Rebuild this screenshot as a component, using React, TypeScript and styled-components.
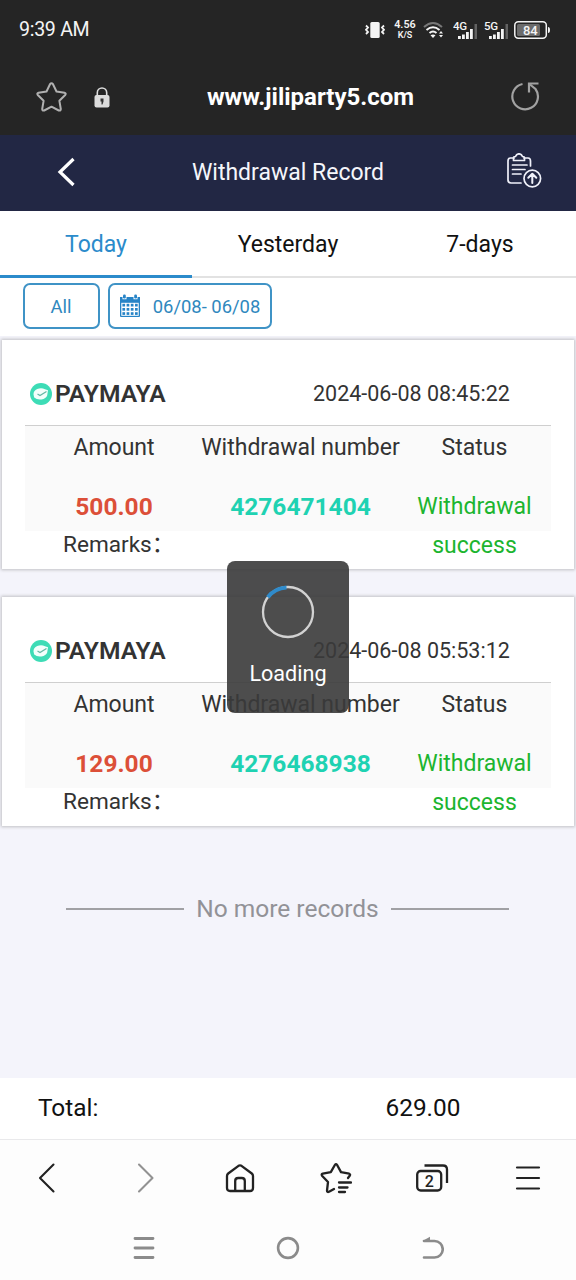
import React from 'react';
import styled, { createGlobalStyle } from 'styled-components';

const GlobalStyle = createGlobalStyle`
  * { box-sizing: border-box; }
  body { margin: 0; background: #fff; font-family: Roboto, "Noto Sans CJK SC", sans-serif; }
  svg { display: block; flex: none; }
`;

const Screen = styled.div`
  width: 576px;
  height: 1280px;
  display: flex;
  flex-direction: column;
  background: #f4f4fb;
  overflow: hidden;
`;

const StatusBar = styled.div`
  height: 60px;
  flex: none;
  display: flex;
  align-items: center;
  justify-content: space-between;
  padding: 0 25px 1px 19px;
  background: #252525;
  color: #f4f4f4;
`;

const Clock = styled.span`
  font-size: 19.6px;
  letter-spacing: -0.3px;
`;

const StatusIcons = styled.div`
  display: flex;
  align-items: center;
`;

const NetSpeed = styled.div`
  width: 22px;
  margin: 0 7px 0 9px;
  display: flex;
  flex-direction: column;
  align-items: center;
  font-weight: 600;
  font-size: 10.8px;
  line-height: 10px;
  & > span + span { font-size: 9px; }
`;

const AddressBar = styled.div`
  height: 75px;
  flex: none;
  display: grid;
  grid-template-columns: 36px 66px 1fr 66px;
  align-items: center;
  padding-bottom: 1px;
  background: #252525;
`;

const AddressIcons = styled.div`
  grid-column: 2;
  display: flex;
  align-items: center;
  gap: 27px;
`;

const Url = styled.div`
  grid-column: 3;
  padding-left: 9px;
  text-align: center;
  font-size: 24px;
  font-weight: 700;
  color: #fff;
`;

const Reload = styled.div`
  grid-column: 4;
`;

const Header = styled.header`
  height: 76px;
  flex: none;
  display: grid;
  grid-template-columns: 96px 1fr 96px;
  align-items: center;
  background: #222744;
  color: #f5f6fb;
  text-align: center;
`;

const BackButton = styled.div`
  padding: 0 0 2px 56px;
`;

const Title = styled.h1`
  margin: 0;
  padding-bottom: 1px;
  font-size: 23px;
  font-weight: 400;
`;

const HistoryButton = styled.div`
  padding: 0 0 5px 26px;
`;

const Tabs = styled.nav`
  height: 67px;
  flex: none;
  display: grid;
  grid-template-columns: repeat(3, 1fr);
  background: #fff;
`;

const Tab = styled.div<{ $active?: boolean }>`
  display: flex;
  align-items: center;
  justify-content: center;
  padding-top: ${(p) => (p.$active ? 3 : 2)}px;
  border-bottom: ${(p) => (p.$active ? '3px solid #2b8bcb' : '2px solid #e2e2e2')};
  color: ${(p) => (p.$active ? '#2b8bcb' : '#111')};
  font-size: 23px;
`;

const Filters = styled.div`
  height: 58px;
  flex: none;
  display: flex;
  gap: 8px;
  padding: 5px 23px;
  background: #fff;
`;

const FilterButton = styled.div<{ $width: number }>`
  width: ${(p) => p.$width}px;
  height: 46px;
  display: flex;
  align-items: center;
  justify-content: center;
  gap: 12px;
  padding-right: 1px;
  border: 2px solid #3f93c6;
  border-radius: 7px;
  color: #2f88be;
  font-size: 18.4px;
`;

const Records = styled.main`
  flex: 1;
  display: flex;
  flex-direction: column;
  gap: 28px;
`;

const Card = styled.section`
  height: 229px;
  flex: none;
  margin: 0 2px;
  padding: 0 23px;
  background: #fff;
  box-shadow: 0 0 3px 1px #c0c0c4;
  color: #333;
  font-size: 23px;

  &:first-child { margin-top: 4px; }
`;

const CardHead = styled.div`
  height: 86px;
  display: flex;
  align-items: center;
  padding: 22px 0 0 4px;
  border-bottom: 1px solid #cfcfcf;
`;

const Provider = styled.span`
  width: 260px;
  padding-left: 2px;
  font-size: 24.6px;
  font-weight: 600;
`;

const Stamp = styled.span`
  font-size: 21.5px;
`;

const Details = styled.div`
  height: 105px;
  display: grid;
  grid-template-columns: 178px 195px 153px;
  grid-template-rows: 61px 39px;
  background: #fafafa;
  line-height: 39px;
  text-align: center;
`;

const Label = styled.div`
  margin: 0 -4px;
  padding-top: 2px;
  white-space: nowrap;
`;

const Value = styled.div<{ $color: string; $strong?: boolean }>`
  color: ${(p) => p.$color};
  font-weight: ${(p) => (p.$strong ? 700 : 400)};
  font-size: ${(p) => (p.$strong ? 24.5 : 23)}px;
`;

const Remarks = styled.div`
  padding-left: 38px;
  font-size: 22.6px;
  line-height: 28px;
`;

const EndNote = styled.div`
  display: flex;
  align-items: center;
  gap: 12px;
  margin: 40px 67px 0 66px;
  color: #929297;
  font-size: 24.5px;

  &::before, &::after {
    content: '';
    flex: 1;
    height: 2px;
    background: #a0a0a4;
  }
`;

const Total = styled.div`
  height: 62px;
  flex: none;
  display: grid;
  grid-template-columns: 270px 1fr;
  align-items: center;
  padding: 0 0 2px 38px;
  background: #fff;
  border-bottom: 1px solid #e9e9eb;
  color: #111;
  font-size: 24.4px;

  & > span + span { text-align: center; padding-right: 38px; }
`;

const BrowserNav = styled.nav`
  height: 76px;
  flex: none;
  display: grid;
  grid-template-columns: 93px 105px 84px 108px 84px 108px;
  align-items: center;
  justify-items: center;
  background: #fdfdfd;
  color: #222;
`;

const SystemNav = styled.nav`
  height: 64px;
  flex: none;
  display: flex;
  align-items: center;
  justify-content: center;
  gap: 120px;
  background: #fdfdfd;
  color: #8b8b8b;
`;

const LoadingToast = styled.div`
  position: absolute;
  left: 227px;
  top: 561px;
  width: 122px;
  height: 152px;
  display: flex;
  flex-direction: column;
  align-items: center;
  padding-top: 24px;
  border-radius: 8px;
  background: rgba(58, 58, 58, 0.9);
  color: #fff;
  font-size: 21.6px;

  & > span { margin-top: 21px; line-height: 27px; }
`;

const SignalGroup = styled.div`
  display: flex;
  gap: 4px;
  margin: 0 3px 0 8px;
`;

const CountText = styled.text`
  font: 500 16px Roboto, sans-serif;
  fill: #222;
`;

const NetText = styled.text`
  font: 500 11.5px Roboto, sans-serif;
  letter-spacing: -0.4px;
  fill: #f4f4f4;
`;

const BatteryText = styled.text`
  font: 500 13px Roboto, sans-serif;
  fill: #f4f4f4;
`;

const VibrateIcon = () => (
  <svg width="20" height="18" viewBox="0 0 20 18" fill="none" stroke="#f4f4f4" strokeWidth="1.8">
    <rect x="5.3" y="1" width="9.4" height="16" rx="1.5" fill="#f4f4f4" stroke="none" />
    <path d="M1 4.5l2 2-2 2.3 2 2.2-2 2M19 4.5l-2 2 2 2.3-2 2.2 2 2" />
  </svg>
);

const WifiIcon = () => (
  <svg width="22" height="18" viewBox="0 0 22 18" fill="none" stroke="#f4f4f4" strokeWidth="2">
    <path d="M1 6Q10 -2 19 6" stroke="#777" />
    <path d="M3.5 9Q10 3.5 16.5 9M6.5 12Q10 9 13.5 12" />
    <path d="M7.5 14.3Q10 12.5 12.5 14.3L10 17z" fill="#f4f4f4" stroke="none" />
    <path d="M16 12.5l2-2.5 2 2.5zM16 14l2 2.5 2-2.5z" fill="#f4f4f4" stroke="none" />
  </svg>
);

const SignalIcon = ({ label }: { label: string }) => (
  <svg width="27" height="20" viewBox="0 0 27 20" fill="#f4f4f4">
    <NetText x="0" y="9.5">{label}</NetText>
    <rect x="5" y="16" width="2.8" height="3" />
    <rect x="9" y="14.5" width="2.8" height="4.5" />
    <rect x="13" y="12" width="2.8" height="7" />
    <rect x="17" y="9" width="2.8" height="10" />
    <rect x="21.5" y="4" width="2.5" height="15" fill="#626262" />
  </svg>
);

const BatteryIcon = () => (
  <svg width="37" height="18" viewBox="0 0 37 18" fill="none">
    <rect x="0.8" y="0.8" width="31.5" height="16.4" rx="3.5" stroke="#f4f4f4" strokeWidth="1.5" />
    <rect x="3" y="3" width="23" height="12" rx="1.5" fill="#6b6b6b" />
    <path d="M34 6q2 0 2 3t-2 3z" fill="#f4f4f4" />
    <BatteryText x="16.3" y="13.6" textAnchor="middle">84</BatteryText>
  </svg>
);

const StarIcon = () => (
  <svg width="31" height="31" viewBox="0 0 31 31" fill="none" stroke="#b0b0b0" strokeWidth="2" strokeLinejoin="round">
    <path d="M14 2.2q1.5-1.8 3 0l3.5 7.3 8 1.2q2 .7.7 2.3l-5.8 5.8 1.4 8.2q0 2-2 1.5l-7.3-3.8-7.3 3.8q-2 .5-2-1.5l1.4-8.2-5.800-5.800q-1.300-1.600.7-2.300l8-1.200z" />
  </svg>
);

const LockIcon = () => (
  <svg width="16" height="21" viewBox="0 0 16 21" fill="none">
    <path d="M3.3 9V5.7a4.7 4.7 0 0 1 9.4 0V9" stroke="#dcdcdc" strokeWidth="1.6" />
    <rect x="0.5" y="8" width="15" height="12.5" rx="2" fill="#dcdcdc" />
    <path d="M6.5 11.5h3v3l-1 3h-1v-3h-1z" fill="#333" />
  </svg>
);

const ReloadIcon = () => (
  <svg width="30" height="30" viewBox="0 0 30 30" fill="none" stroke="#a2a2a2" strokeWidth="2.2">
    <path d="M12.5 2A12.8 12.8 0 1 0 25.500 7L20 2.500" />
    <path d="M28.500 1.500H19V10.500" />
  </svg>
);

const BackIcon = () => (
  <svg width="20" height="30" viewBox="0 0 20 30" fill="none" stroke="#fff" strokeWidth="3.2">
    <path d="M17.5 2L4 15l13.5 13" />
  </svg>
);

const ClipboardIcon = () => (
  <svg width="36" height="36" viewBox="0 0 36 36" fill="none" stroke="#f0f1fa" strokeWidth="1.7" strokeLinecap="round" strokeLinejoin="round">
    <path d="M8 5H4.5Q2 5 2 8v19q0 3 3 3h10M18 5h4q2.5 0 2.5 3v5" />
    <path d="M7.5 7.5V5q0-1.5 2-1.5 1-2.7 3.500-2.700t3.500 2.700q2 0 2 1.500v2.500z" />
    <path d="M6.5 12H21M6.5 16.5H19M6.5 21H15" />
    <circle cx="26.3" cy="25.5" r="8.3" />
    <path d="M26.3 30v-9M22.3 24.7l4-4 4 4" strokeWidth="2" />
  </svg>
);

const CalendarIcon = () => (
  <svg width="22" height="24" viewBox="0 0 22 24" fill="#2784c7">
    <path d="M1 3h2.5v2.2h4V3h7v2.2h4V3H21v5H1z" />
    <rect x="4" y="0.5" width="2.8" height="4" rx="1.2" />
    <rect x="15.2" y="0.5" width="2.8" height="4" rx="1.2" />
    <rect x="1" y="7" width="20" height="16" rx="1" />
    <rect x="2.3" y="8.8" width="17.4" height="13" fill="#fff" />
    {[9.8, 14, 18.2].map((y) => [3.4, 7.6, 11.8, 16].map((x) => (
      <rect key={`${x}-${y}`} x={x} y={y} width="2.7" height="2.7" />
    )))}
  </svg>
);

const ProviderIcon = () => (
  <svg width="24" height="24" viewBox="0 0 24 24" fill="none">
    <circle cx="12" cy="12" r="11" fill="#3ddcb6" />
    <path d="M4.5 12.500a7.500 6 0 0 1 11.500-5.300l3 1-.8 5.300a7.500 5.500 0 0 1-13 2z" fill="#f3fffc" />
    <path d="M8.500 12l2.500 1.500 6.500-4" stroke="#66b8a5" strokeWidth="1.3" />
  </svg>
);

const Spinner = () => (
  <svg width="54" height="54" viewBox="0 0 54 54" fill="none">
    <circle cx="27" cy="27" r="25" stroke="#d2d2d2" strokeWidth="2.3" />
    <path d="M6.8 12.3A25 25 0 0 1 25.5 2.5" stroke="#2f8bcb" strokeWidth="4" />
  </svg>
);

const ChevronIcon = ({ forward }: { forward?: boolean }) => (
  <svg width="18" height="32" viewBox="0 0 18 32" fill="none" stroke={forward ? '#929292' : '#222'} strokeWidth="2.1" strokeLinecap="round" strokeLinejoin="round">
    <path d={forward ? 'M2 2.5L15.5 16 2 29.5' : 'M15.5 2.5L2 16l13.5 13.5'} />
  </svg>
);

const HomeIcon = () => (
  <svg width="30" height="30" viewBox="0 0 30 30" fill="none" stroke="currentColor" strokeWidth="2.3" strokeLinejoin="round">
    <path d="M2 13q0-1.5 1.2-2.5L13.5 2.8q1.5-1 3 0l10.3 7.700Q28 11.5 28 13v12q0 3-3 3H5q-3 0-3-3z" />
    <path d="M10.2 28V18q0-3 3-3h3.6q3 0 3 3v10" />
  </svg>
);

const FavoritesIcon = () => (
  <svg width="32" height="32" viewBox="0 0 32 32" fill="none" stroke="currentColor" strokeWidth="2.3" strokeLinecap="round" strokeLinejoin="round">
    <path d="M14 27l-5 2.8q-2 .8-2-1.3l1-8.5-6-6.3q-1-1.5.8-2l8-1.6L15 2.8q1-1.5 2 0l4 7.3 8.2 1.6q1.5.6.5 2.1L28 16" />
    <path d="M19 20.5h12M19 25.5h8.500M19 30h6" />
  </svg>
);

const PagesIcon = () => (
  <svg width="34" height="30" viewBox="0 0 34 30" fill="none" stroke="currentColor" strokeWidth="2.3">
    <rect x="2.2" y="8" width="24" height="19.5" rx="3.5" />
    <path d="M9.5 2.5H28q4 0 4 4V20" />
    <CountText x="14.2" y="23.5" textAnchor="middle" stroke="none">2</CountText>
  </svg>
);

const MenuIcon = () => (
  <svg width="26" height="26" viewBox="0 0 26 26" stroke="currentColor" strokeWidth="2.2" strokeLinecap="round">
    <path d="M2 2.5h22M2 13h22M2 23.5h22" />
  </svg>
);

const RecentIcon = () => (
  <svg width="24" height="24" viewBox="0 0 24 24" stroke="currentColor" strokeWidth="2.8" strokeLinecap="round">
    <path d="M3 2.5h18M3 12h18M3 21.5h18" />
  </svg>
);

const CircleIcon = () => (
  <svg width="24" height="24" viewBox="0 0 24 24" fill="none" stroke="currentColor" strokeWidth="2.6">
    <circle cx="12" cy="12" r="9.9" />
  </svg>
);

const ReturnIcon = () => (
  <svg width="24" height="24" viewBox="0 0 24 24" fill="none" stroke="currentColor" strokeWidth="2.6" strokeLinecap="round">
    <path d="M4 5h10.500a8.200 8.200 0 0 1 0 16.500H4" />
    <path d="M2.500 5L10 .8V5z" fill="currentColor" stroke="none" />
  </svg>
);

const records = [
  { time: '2024-06-08 08:45:22', amount: '500.00', number: '4276471404' },
  { time: '2024-06-08 05:53:12', amount: '129.00', number: '4276468938' },
];

export default function App() {
  return (
    <>
      <GlobalStyle />
      <Screen>
        <StatusBar>
          <Clock>9:39 AM</Clock>
          <StatusIcons>
            <VibrateIcon />
            <NetSpeed><span>4.56</span><span>K/S</span></NetSpeed>
            <WifiIcon />
            <SignalGroup>
              <SignalIcon label="4G" />
              <SignalIcon label="5G" />
            </SignalGroup>
            <BatteryIcon />
          </StatusIcons>
        </StatusBar>
        <AddressBar>
          <AddressIcons><StarIcon /><LockIcon /></AddressIcons>
          <Url>www.jiliparty5.com</Url>
          <Reload><ReloadIcon /></Reload>
        </AddressBar>
        <Header>
          <BackButton><BackIcon /></BackButton>
          <Title>Withdrawal Record</Title>
          <HistoryButton><ClipboardIcon /></HistoryButton>
        </Header>
        <Tabs>
          <Tab $active>Today</Tab>
          <Tab>Yesterday</Tab>
          <Tab>7-days</Tab>
        </Tabs>
        <Filters>
          <FilterButton $width={77}>All</FilterButton>
          <FilterButton $width={164}><CalendarIcon /><span>06/08- 06/08</span></FilterButton>
        </Filters>
        <Records>
          {records.map((r) => (
            <Card key={r.number}>
              <CardHead>
                <ProviderIcon />
                <Provider>PAYMAYA</Provider>
                <Stamp>{r.time}</Stamp>
              </CardHead>
              <Details>
                <Label>Amount</Label>
                <Label>Withdrawal number</Label>
                <Label>Status</Label>
                <Value $color="#dc4f38" $strong>{r.amount}</Value>
                <Value $color="#1fd2b2" $strong>{r.number}</Value>
                <Value $color="#1cb52f">Withdrawal success</Value>
              </Details>
              <Remarks lang="zh-CN">{'Remarks\uFF1A'}</Remarks>
            </Card>
          ))}
          <EndNote>No more records</EndNote>
        </Records>
        <Total><span>Total:</span><span>629.00</span></Total>
        <BrowserNav>
          <ChevronIcon />
          <ChevronIcon forward />
          <HomeIcon />
          <FavoritesIcon />
          <PagesIcon />
          <MenuIcon />
        </BrowserNav>
        <SystemNav><RecentIcon /><CircleIcon /><ReturnIcon /></SystemNav>
      </Screen>
      <LoadingToast><Spinner /><span>Loading</span></LoadingToast>
    </>
  );
}
